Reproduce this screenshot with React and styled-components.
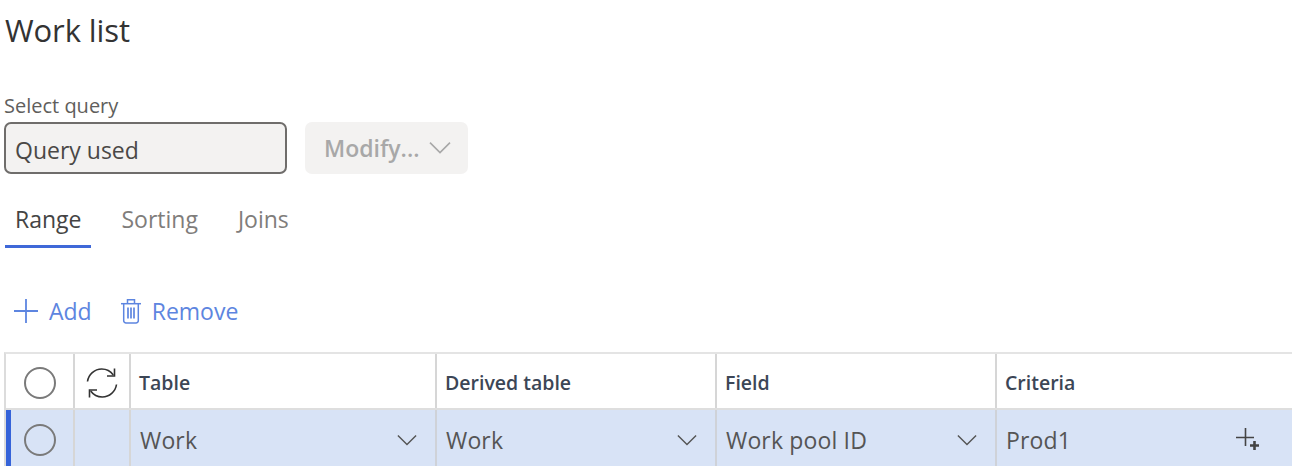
import styled, { createGlobalStyle } from "styled-components"

const GlobalStyle = createGlobalStyle`
  html, body {
    margin: 0;
    background: #fff;
    overflow: hidden;
  }
  body {
    font-family: "Open Sans", "Noto Sans", sans-serif;
  }
`

const columns = [
  { name: "Table", value: "Work", width: 306 },
  { name: "Derived table", value: "Work", width: 280 },
  { name: "Field", value: "Work pool ID", width: 280 },
]

const Chevron = ({ width = 22 }) => (
  <svg width={width} height={width * 0.6} viewBox="0 0 22 13" fill="none" stroke="currentColor" strokeWidth="1.6">
    <path d="M1 1.5l10 10 10-10" />
  </svg>
)

const App = () => {
  return (
    <StPage>
      <GlobalStyle />
      <StTitle>Work list</StTitle>

      <StLabel>Select query</StLabel>
      <StQueryRow>
        <StQueryInput>Query used</StQueryInput>
        <StModify>
          Modify...
          <Chevron />
        </StModify>
      </StQueryRow>

      <StTabs>
        <StTab $active>Range</StTab>
        <StTab>Sorting</StTab>
        <StTab>Joins</StTab>
      </StTabs>

      <StToolbar>
        <StAction>
          <svg width="24" height="26" viewBox="0 0 24 26" fill="none" stroke="currentColor" strokeWidth="1.8">
            <path d="M0 13h24M12 1v24" />
          </svg>
          Add
        </StAction>
        <StAction>
          <svg width="20" height="26" viewBox="0 0 20 26" fill="none" stroke="currentColor" strokeWidth="1.5">
            <path d="M0 5.7h20" />
            <path d="M6.5 5.5V1.7h7v3.8" />
            <path d="M2.7 5.7v17a2.3 2.3 0 0 0 2.3 2.3h10a2.3 2.3 0 0 0 2.3-2.3v-17" />
            <path d="M7 9.5v11M10 9.5v11M13 9.5v11" strokeWidth="1.7" />
          </svg>
          Remove
        </StAction>
      </StToolbar>

      <StGrid>
        <StHeadRow>
          <StMarkCell><StCircle /></StMarkCell>
          <StSyncCell>
            <svg width="32" height="34" viewBox="0 0 32 34" fill="none" stroke="#333" strokeWidth="1.6">
              <path d="M1.5 15.5C2.5 8.5 8.5 3 15.7 3c4.7 0 9 2.3 11.6 6" />
              <path d="M28.5 2.5V10H21" />
              <path d="M30.5 18.5C29.5 25.5 23.5 31 16.3 31c-4.7 0-9-2.3-11.6-6" />
              <path d="M3.5 31.5V24H11" />
            </svg>
          </StSyncCell>
          {columns.map((col) => (
            <StHeadCell key={col.name} $width={col.width}>{col.name}</StHeadCell>
          ))}
          <StHeadCell $last>Criteria</StHeadCell>
        </StHeadRow>

        <StBodyRow>
          <StMarkCell $selected><StCircle /></StMarkCell>
          <StSyncCell />
          {columns.map((col) => (
            <StBodyCell key={col.name} $width={col.width}>
              {col.value}
              <Chevron width={20} />
            </StBodyCell>
          ))}
          <StBodyCell $last>
            Prod1
            <StLookup>
              <svg width="24" height="24" viewBox="0 0 24 24" fill="none" stroke="#444">
                <path d="M0 9.5h18M9.5 0v18" strokeWidth="1.6" />
                <path d="M18.5 13v9M14 17.5h9" strokeWidth="2.6" />
              </svg>
            </StLookup>
          </StBodyCell>
        </StBodyRow>
      </StGrid>
    </StPage>
  )
}

//-----styled-components-----

const StPage = styled.div`
  width: 1292px;
  height: 466px;
  overflow: hidden;
  color: #323130;
`

const StTitle = styled.h1`
  margin: 0;
  padding: 11px 0 0 5px;
  height: 48px;
  font-size: 31px;
  line-height: 38px;
  font-weight: 500;
  color: #333;
  letter-spacing: -0.1px;
`

const StLabel = styled.div`
  margin-top: 34px;
  padding-left: 4px;
  height: 29px;
  font-size: 20px;
  line-height: 26px;
  color: #605e5c;
`

const StQueryRow = styled.div`
  display: flex;
  gap: 18px;
  padding-left: 4px;
`

const StQueryInput = styled.div`
  box-sizing: border-box;
  width: 283px;
  height: 52px;
  padding: 4px 9px 0;
  display: flex;
  align-items: center;
  background: #f3f2f1;
  border: 2px solid #6f6d6b;
  border-radius: 7px;
  font-size: 23px;
  color: #4a4846;
`

const StModify = styled.div`
  width: 163px;
  height: 52px;
  padding: 0 0 0 19px;
  box-sizing: border-box;
  display: flex;
  align-items: center;
  gap: 9px;
  background: #f3f2f1;
  border-radius: 7px;
  font-size: 23px;
  font-weight: 600;
  color: #a8a8a8;
`

const StTabs = styled.div`
  display: flex;
  margin: 23px 0 0 5px;
  height: 51px;
`

const StTab = styled.div`
  box-sizing: border-box;
  height: 51px;
  padding: 7px 10px 0;
  margin-right: 20px;
  font-size: 23px;
  line-height: 30px;
  color: ${({ $active }) => ($active ? "#444" : "#7f7d7b")};
  border-bottom: 3px solid ${({ $active }) => ($active ? "#3f68d8" : "transparent")};
`

const StToolbar = styled.div`
  display: flex;
  align-items: center;
  gap: 29px;
  height: 44px;
  margin-top: 41px;
  padding-left: 14px;
  box-sizing: border-box;
`

const StAction = styled.div`
  display: flex;
  align-items: center;
  gap: 11px;
  font-size: 23px;
  color: #5d85e0;
`

const StGrid = styled.div`
  margin: 19px 0 0 4px;
  border-top: 2px solid #e4e4e4;
  border-left: 2px solid #dcdcdc;
`

const StHeadRow = styled.div`
  display: flex;
  height: 54px;
  border-bottom: 2px solid #dedede;
`

const StBodyRow = styled.div`
  display: flex;
  height: 56px;
  background: #d8e3f6;
`

const StMarkCell = styled.div`
  box-sizing: border-box;
  width: 69px;
  padding-top: 3px;
  display: flex;
  align-items: center;
  justify-content: center;
  border-right: 2px solid #d6d6d6;
  ${({ $selected }) => $selected && "box-shadow: inset 5px 0 0 #3563d9;"}
`

const StCircle = styled.span`
  box-sizing: border-box;
  width: 32px;
  height: 32px;
  border-radius: 50%;
  border: 2px solid #7a7a7a;
`

const StSyncCell = styled.div`
  box-sizing: border-box;
  width: 56px;
  padding-top: 3px;
  display: flex;
  align-items: center;
  justify-content: center;
  border-right: 2px solid #d6d6d6;
`

const StHeadCell = styled.div`
  box-sizing: border-box;
  width: ${({ $width }) => ($width ? `${$width}px` : "auto")};
  flex: ${({ $last }) => ($last ? "1" : "none")};
  padding: 3px 0 0 8px;
  display: flex;
  align-items: center;
  font-size: 19.5px;
  font-weight: 600;
  color: #3c4656;
  border-right: ${({ $last }) => ($last ? "none" : "2px solid #d6d6d6")};
`

const StBodyCell = styled.div`
  box-sizing: border-box;
  width: ${({ $width }) => ($width ? `${$width}px` : "auto")};
  flex: ${({ $last }) => ($last ? "1" : "none")};
  padding: 3px 18px 0 9px;
  display: flex;
  align-items: center;
  justify-content: space-between;
  font-size: 23px;
  letter-spacing: 0.15px;
  color: #555;
  border-right: ${({ $last }) => ($last ? "none" : "2px solid #cfd2d8")};
`

const StLookup = styled.span`
  display: flex;
  margin-right: 14px;
`

export default App
